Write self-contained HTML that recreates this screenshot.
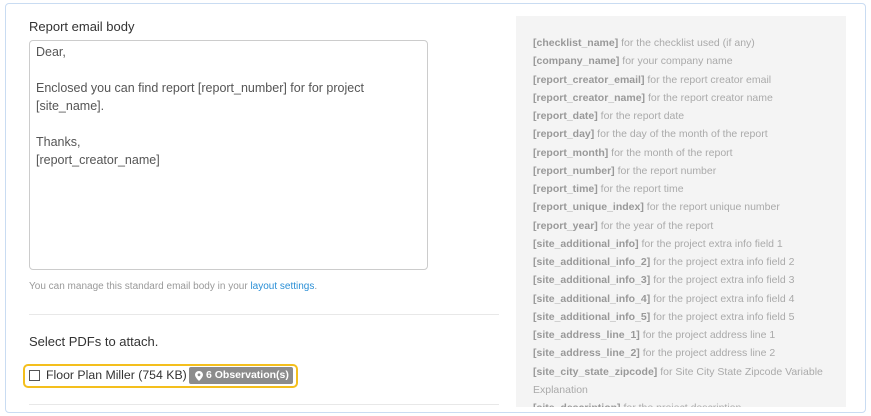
<!DOCTYPE html>
<html><head><meta charset="utf-8"><style>
*{box-sizing:border-box;margin:0;padding:0}
body{width:871px;height:416px;overflow:hidden;background:#fff;font-family:"Liberation Sans",Arial,sans-serif;position:relative}
.card{position:absolute;left:5px;top:3px;width:861px;height:410px;border:1px solid #c9dcf2;border-radius:4px}
.abs{position:absolute;white-space:nowrap}
.label{left:29px;top:19px;font-size:13px;color:#333}
.ta{left:29px;top:40px;width:399px;height:230px;border:1px solid #ccc;border-radius:4px;padding:2px 6px;font-size:12.5px;line-height:18px;color:#555}
.help{left:29px;top:281px;font-size:10px;color:#999}
.help a{color:#2a8fd6;text-decoration:none}
.sep{left:29px;width:470px;height:1px;background:#e8e8e8}
.sel{left:29px;top:334px;font-size:13px;color:#333}
.hl{left:23px;top:364px;width:275px;height:24px;border:2px solid #f4bf1d;border-radius:5px}
.cb{left:29px;top:370px;width:11px;height:11px;border:1px solid #555;background:#fff}
.fp{left:46px;top:368px;font-size:12.3px;color:#333}
.badge{left:189px;top:367px;height:17px;width:104px;background:#8c8c8c;border-radius:2px;color:#fff;font-size:10.5px;font-weight:bold;line-height:17px;padding-left:17px}
.panel{left:516px;top:16px;width:330px;height:391px;background:#f4f4f4;overflow:hidden;padding:18px 0 0 17px;font-size:10.5px;line-height:18.25px;color:#aaa}
.panel b{color:#999}
</style></head><body>
<div class="card"></div>
<div class="abs label">Report email body</div>
<div class="abs ta">Dear,<br><br>Enclosed you can find report [report_number] for for project<br>[site_name].<br><br>Thanks,<br>[report_creator_name]</div>
<div class="abs help">You can manage this standard email body in your <a>layout settings</a>.</div>
<div class="abs sep" style="top:314px"></div>
<div class="abs sel">Select PDFs to attach.</div>
<div class="abs hl"></div>
<div class="abs cb"></div>
<div class="abs fp">Floor Plan Miller (754 KB)</div>
<div class="abs badge"><svg class="abs" style="left:6px;top:4px" width="8" height="10" viewBox="0 0 8 10"><path d="M4 0C1.8 0 0 1.7 0 3.8 0 6.5 4 10 4 10s4-3.5 4-6.2C8 1.7 6.2 0 4 0zm0 5.2a1.4 1.4 0 1 1 0-2.8 1.4 1.4 0 0 1 0 2.8z" fill="#fff"/></svg>6 Observation(s)</div>
<div class="abs sep" style="top:404px"></div>
<div class="abs panel">
<b>[checklist_name]</b> for the checklist used (if any)<br>
<b>[company_name]</b> for your company name<br>
<b>[report_creator_email]</b> for the report creator email<br>
<b>[report_creator_name]</b> for the report creator name<br>
<b>[report_date]</b> for the report date<br>
<b>[report_day]</b> for the day of the month of the report<br>
<b>[report_month]</b> for the month of the report<br>
<b>[report_number]</b> for the report number<br>
<b>[report_time]</b> for the report time<br>
<b>[report_unique_index]</b> for the report unique number<br>
<b>[report_year]</b> for the year of the report<br>
<b>[site_additional_info]</b> for the project extra info field 1<br>
<b>[site_additional_info_2]</b> for the project extra info field 2<br>
<b>[site_additional_info_3]</b> for the project extra info field 3<br>
<b>[site_additional_info_4]</b> for the project extra info field 4<br>
<b>[site_additional_info_5]</b> for the project extra info field 5<br>
<b>[site_address_line_1]</b> for the project address line 1<br>
<b>[site_address_line_2]</b> for the project address line 2<br>
<b>[site_city_state_zipcode]</b> for Site City State Zipcode Variable<br>Explanation<br>
<b>[site_description]</b> for the project description
</div>
</body></html>
